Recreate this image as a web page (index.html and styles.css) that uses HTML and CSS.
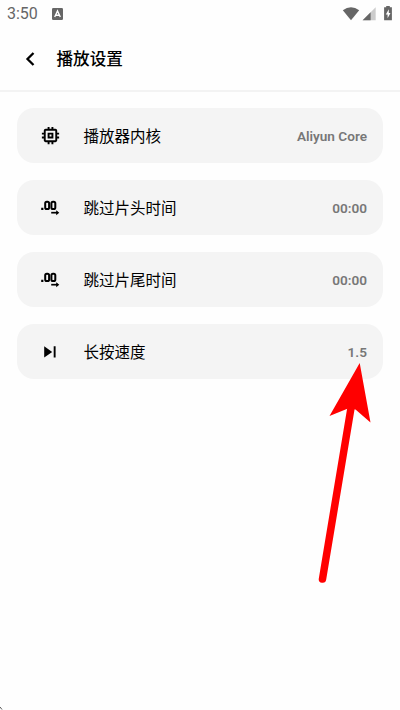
FILE: index.html
```
<!DOCTYPE html>
<html lang="zh-CN">
<head>
<meta charset="utf-8">
<title>播放设置</title>
<link rel="stylesheet" href="styles.css">
</head>
<body>
<div class="status">
  <span class="clock">3:50</span>
  <svg class="badge" width="11" height="12" viewBox="0 0 11 12"><rect width="11" height="12" rx="1.3" fill="#666"/><path d="M2.7 9 5.5 3 8.3 9M3.8 7.3H7.2" fill="none" stroke="#fff" stroke-width="1.4"/></svg>
  <svg class="signals" width="52" height="16" viewBox="0 0 52 16">
    <path d="M.8 4.2Q9 -1.8 17.2 4.2L9 14.3Z" fill="#666"/>
    <path d="M33.7 1.2V14.3H20.6Z" fill="#ccc"/><path d="M28.6 6.3V14.3H20.6Z" fill="#666"/>
    <path d="M42.1 1.3H44.2V0H47.8V1.3H49.9V14.3H42.1Z" fill="#666"/><path d="M46.8 3.3 43.8 8.4H45.6V12.3L48.5 7H46.8Z" fill="#fff"/>
  </svg>
</div>
<header class="header">
  <svg width="10" height="14" viewBox="0 0 10 14"><path d="M8.5 1 2.5 7 8.5 13" fill="none" stroke="#000" stroke-width="2.3"/></svg>
  <h1>播放设置</h1>
</header>
<main class="list">
  <div class="card">
    <svg class="icon" viewBox="0 0 24 24"><path d="M15 9H9v6h6V9zm-2 4h-2v-2h2v2zm8-2V9h-2V7c0-1.100-.9-2-2-2h-2V3h-2v2h-2V3H9v2H7c-1.100 0-2 .9-2 2v2H3v2h2v2H3v2h2v2c0 1.100.9 2 2 2h2v2h2v-2h2v2h2v-2h2c1.100 0 2-.9 2-2v-2h2v-2h-2v-2h2zm-4 6H7V7h10v10z"/></svg>
    <span class="label">播放器内核</span><span class="value">Aliyun Core</span>
  </div>
  <div class="card">
    <svg class="icon" viewBox="0 -1.500 23 23"><g fill="none" stroke="#000" stroke-width="2"><rect x="6.200" y="4.200" width="3.900" height="7.300" rx="1.600"/><rect x="12.400" y="4.200" width="3.900" height="7.300" rx="1.600"/><path d="M12.200 15.200H18.500" stroke-width="1.700"/></g><path d="M2.200 10.300h2.200v2.200H2.200zM17.200 12.700 20.300 15.200 17.200 17.700z"/></svg>
    <span class="label">跳过片头时间</span><span class="value">00:00</span>
  </div>
  <div class="card">
    <svg class="icon" viewBox="0 -1.500 23 23"><g fill="none" stroke="#000" stroke-width="2"><rect x="6.200" y="4.200" width="3.900" height="7.300" rx="1.600"/><rect x="12.400" y="4.200" width="3.900" height="7.300" rx="1.600"/><path d="M12.200 15.200H18.500" stroke-width="1.700"/></g><path d="M2.200 10.300h2.200v2.200H2.200zM17.200 12.700 20.300 15.200 17.200 17.700z"/></svg>
    <span class="label">跳过片尾时间</span><span class="value">00:00</span>
  </div>
  <div class="card">
    <svg class="icon" viewBox="0 0 23 23"><path d="M5.200 6.300v11.200l8-5.600zM14.700 6.300h1.900v11.200h-1.900z"/></svg>
    <span class="label">长按速度</span><span class="value">1.5</span>
  </div>
</main>
<svg class="pointer" width="46" height="222" viewBox="0 0 46 222"><path d="M34.700 0 45.500 59.500 30.500 46.500 23 45.500 4.500 53Z" fill="red"/><path d="M26.500 42-2.500 216" fill="none" stroke="red" stroke-width="7.500" stroke-linecap="round"/></svg>
<svg class="corner" width="3" height="4" viewBox="0 0 3 4"><path d="M0 1 2 3.500" stroke="#555"/></svg>
</body>
</html>
```
FILE: styles.css
```
* { box-sizing: border-box; }
body {
  margin: 0;
  height: 710px;
  overflow: hidden;
  position: relative;
  background: #fefefe;
  color: #000;
  font-family: Roboto, "Noto Sans CJK SC", sans-serif;
}
.status {
  display: flex;
  height: 28px;
  padding: 0 6px 0 7px;
  align-items: center;
  color: #666;
}
.clock { width: 45px; font-size: 16px; line-height: 28px; }
.badge { margin-bottom: 1px; }
.signals { margin-left: auto; margin-bottom: 1px; }
.header {
  display: flex;
  align-items: center;
  gap: 21.500px;
  height: 64px;
  padding: 0 25px 1px;
  border-bottom: 2px solid #f3f3f3;
}
h1 {
  margin: 0;
  padding-top: 3px;
  font-size: 16.600px;
  line-height: 24px;
  font-weight: 500;
}
.list {
  display: flex;
  flex-direction: column;
  gap: 16.600px;
  padding: 15.500px 17px 0;
}
.card {
  display: flex;
  align-items: center;
  height: 55.500px;
  padding: 0 16px 0 21.500px;
  border-radius: 17px;
  background: #f4f4f4;
}
.icon { width: 23px; height: 23px; margin-right: 22px; }
.label { padding-top: 2.500px; font-size: 15.500px; line-height: 24px; }
.value {
  margin-left: auto;
  padding-top: 1px;
  font-size: 13.600px;
  font-weight: 600;
  color: #777;
}
.pointer {
  position: absolute;
  left: 325px;
  top: 363px;
  overflow: visible;
}
.corner { position: absolute; left: 0; bottom: 0; }
```
